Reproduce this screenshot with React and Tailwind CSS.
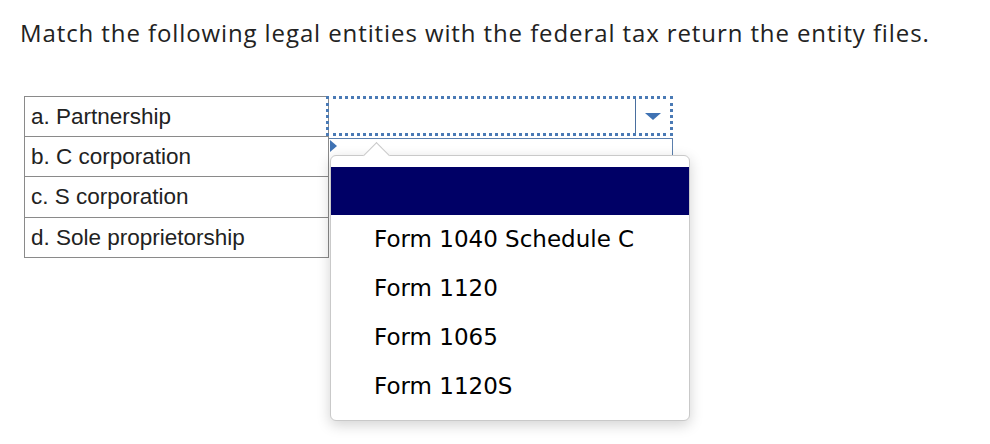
import React from "react";

const rows = ["a. Partnership", "b. C corporation", "c. S corporation", "d. Sole proprietorship"];
const options = ["Form 1040 Schedule C", "Form 1120", "Form 1065", "Form 1120S"];

export default function App() {
  return (
    <div className="relative w-[990px] h-[444px] overflow-hidden bg-white">
      <div
        className="pl-[20px] pt-[16px] text-[24px] leading-[34px] tracking-[0.9px] text-[#222222]"
        style={{ fontFamily: "'Open Sans', Lato, sans-serif" }}
      >
        Match the following legal entities with the federal tax return the entity files.
      </div>

      <div className="mt-[46px] ml-[24px] flex">
        <div
          className="w-[305px] border-t border-l border-r border-[#8a8a8a] text-[22.5px] text-[#222222]"
          style={{ fontFamily: "'Liberation Sans', Arial, sans-serif" }}
        >
          {rows.map((r, i) => (
            <div
              key={r}
              className={`border-b border-[#8a8a8a] pl-[6px] flex items-center ${i === 2 ? "h-[41px]" : "h-[40px]"}`}
            >
              {r}
            </div>
          ))}
        </div>

        <div className="relative w-[344px]">
          <div className="ml-[-3px] h-[40px] w-[347px] border-[3px] border-dotted border-[#4a7ab5] flex justify-end">
            <div className="w-[35px] h-full border-l border-[#4a6f9e] flex items-center justify-center">
              <svg width="16" height="7" viewBox="0 0 16 7">
                <polygon points="0,0 16,0 8,7" fill="#3f72b3" />
              </svg>
            </div>
          </div>
          <div className="mt-[2px] h-[40px] w-[344px] border-t border-r border-[#5b7fad] relative">
            <svg className="absolute left-[1px] top-[1px]" width="7" height="12" viewBox="0 0 7 12">
              <polygon points="0,0 7,6 0,12" fill="#3f72b3" />
            </svg>
          </div>
        </div>
      </div>

      <div className="absolute left-[330px] top-[155px] w-[360px] h-[266px] bg-white border border-[#c9c9c9] rounded-[6px] shadow-[0_4px_14px_rgba(0,0,0,0.18)]">
        <div className="absolute left-[36px] top-[-10px] w-[19px] h-[19px] rotate-45 bg-white border-l border-t border-[#c9c9c9]" />
        <div className="relative pt-[11px]" style={{ fontFamily: "'DejaVu Sans', Verdana, sans-serif" }}>
          <div className="h-[48px] bg-[#000066]" />
          {options.map((o) => (
            <div key={o} className="h-[49px] pl-[43px] flex items-center text-[23px] text-black">
              {o}
            </div>
          ))}
        </div>
      </div>
    </div>
  );
}
